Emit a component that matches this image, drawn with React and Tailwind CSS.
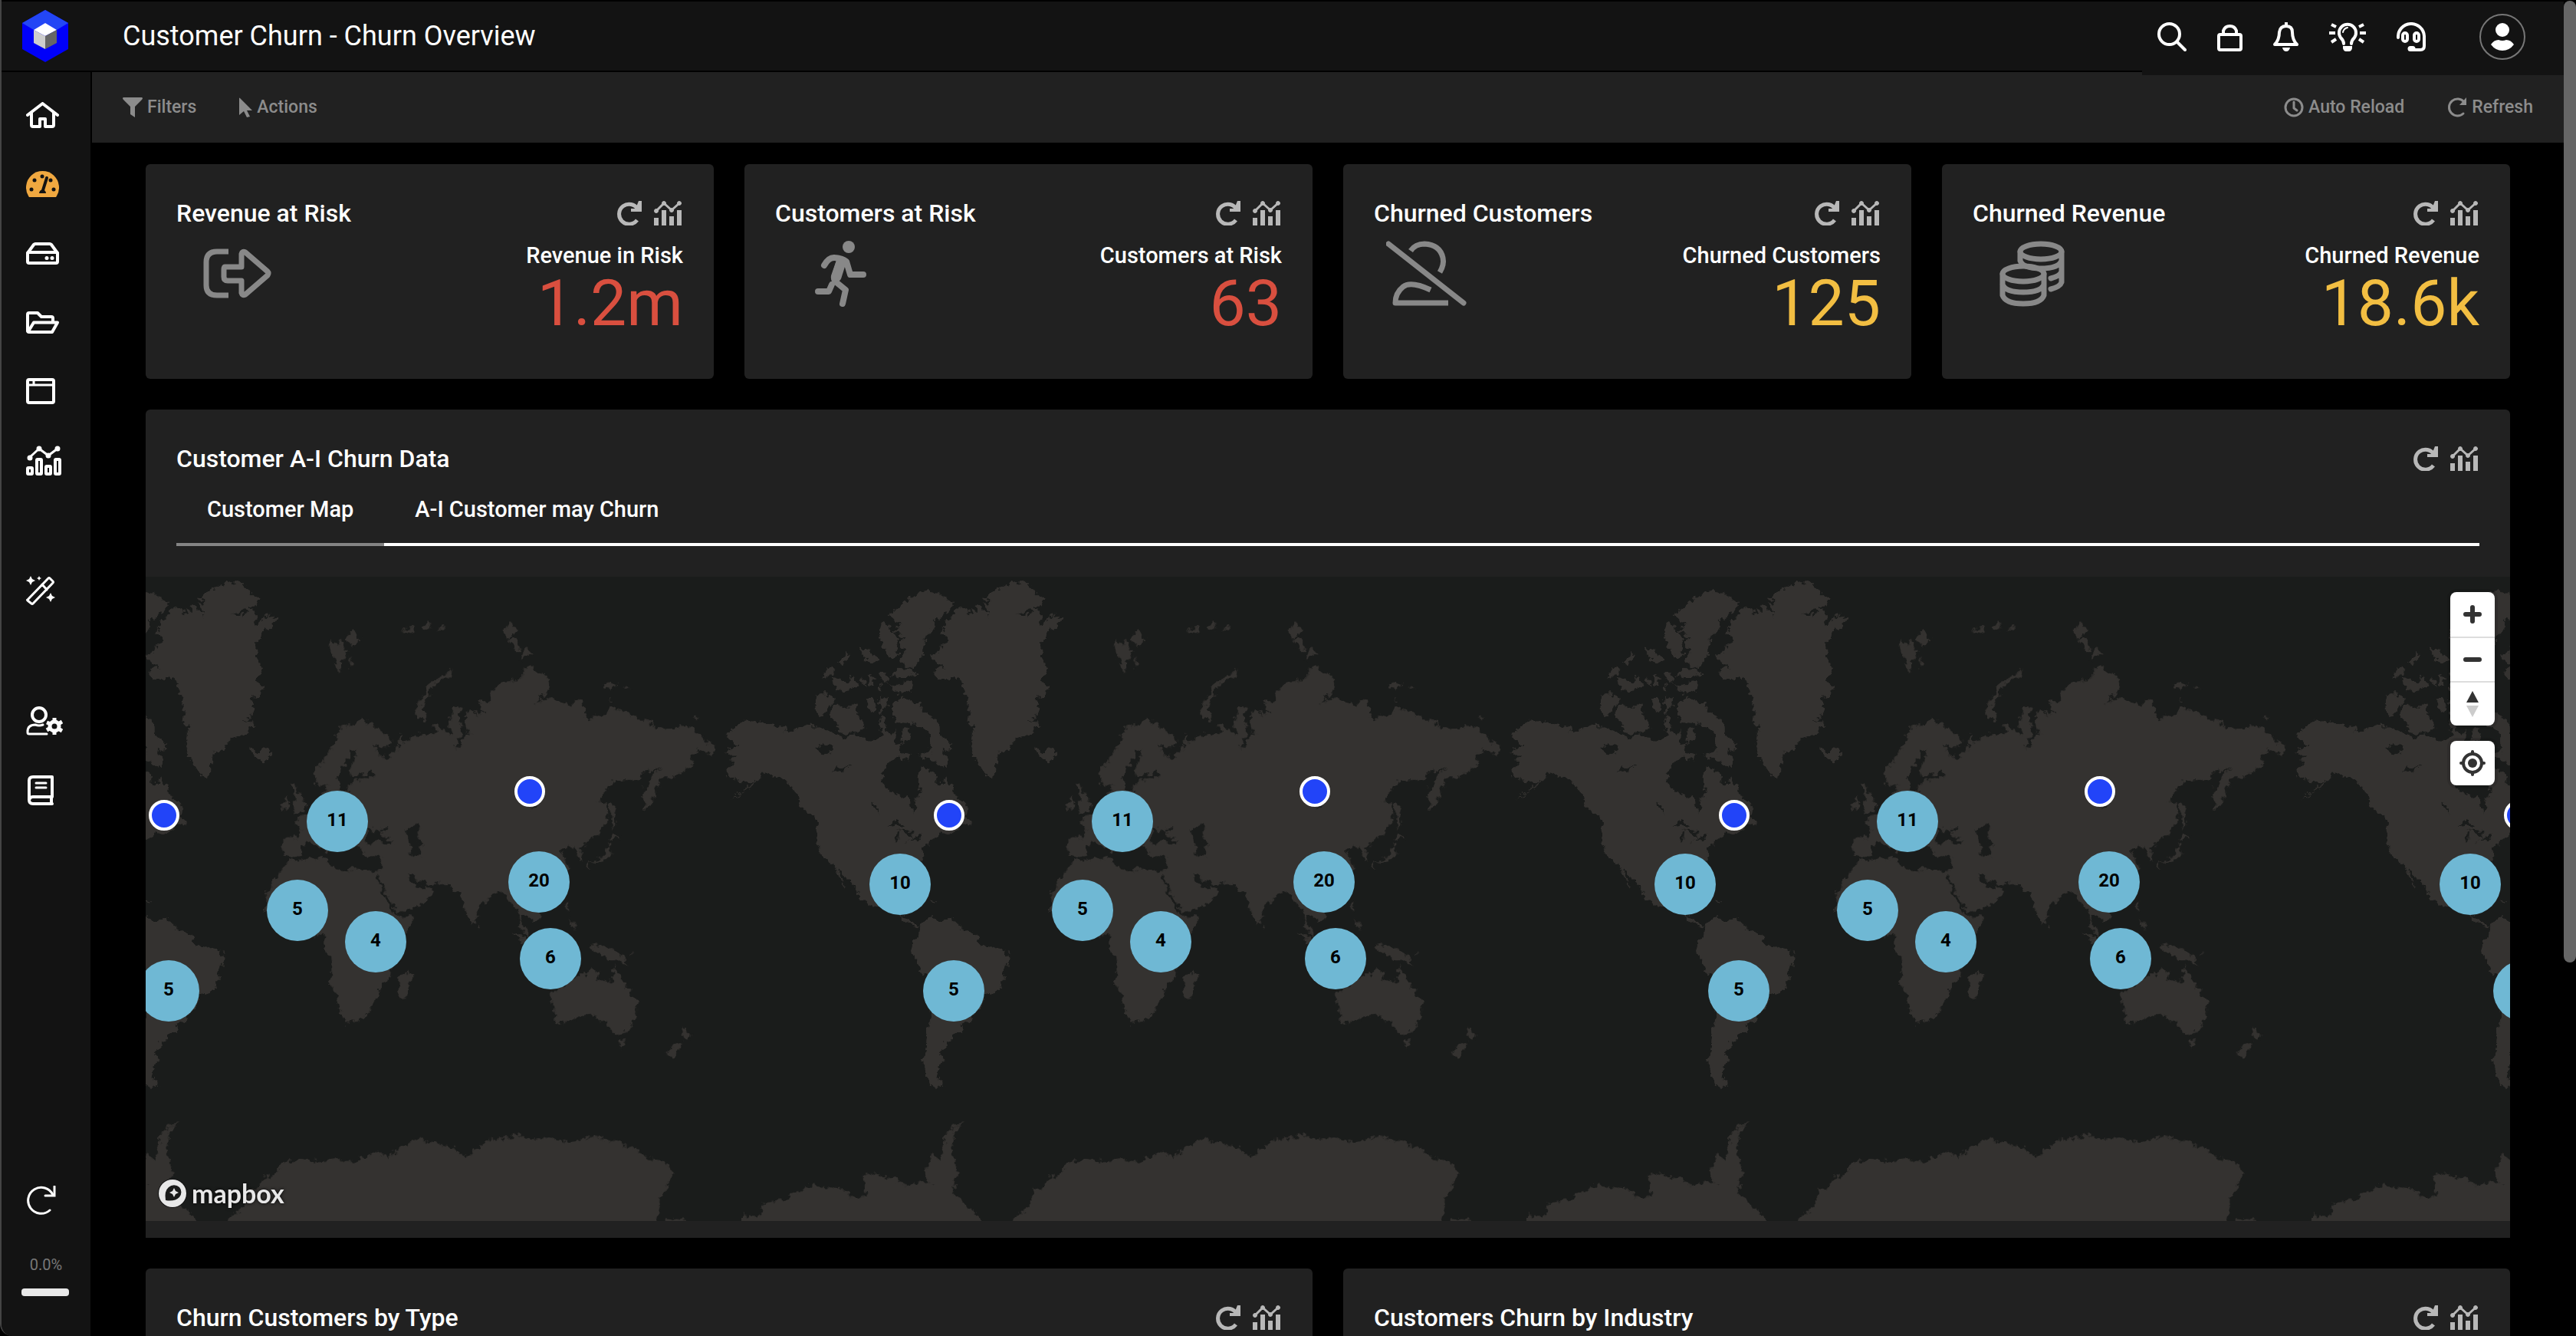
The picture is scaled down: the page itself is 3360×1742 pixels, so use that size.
import { useState } from "react";

/* ---------- Icons ---------- */

const Icon = ({ w, h, sw = 4, className = "", children }) => (
  <svg
    width={w}
    height={h}
    viewBox={`0 0 ${w} ${h}`}
    fill="none"
    stroke="currentColor"
    strokeWidth={sw}
    strokeLinecap="round"
    strokeLinejoin="round"
    className={`shrink-0 ${className}`}
    aria-hidden="true"
  >
    {children}
  </svg>
);

const LogoIcon = () => (
  <svg width="60" height="68" viewBox="0 0 60 68" aria-hidden="true">
    <path d="M30 0 60 17v34L30 68 0 51V17z" fill="#0000fa" />
    <path d="M30 0 60 17 45 26 30 17 15 26 0 17z" fill="#2346f5" />
    <path d="M30 17 45 26 30 34 15 26z" fill="#fff" />
    <path d="M15 26 30 34v17l-15-8z" fill="#cdcdcd" />
    <path d="M45 26 30 34v17l15-8z" fill="#666" />
  </svg>
);

const HomeIcon = () => (
  <Icon w={43} h={34}>
    <path d="M2 17 21.500 2 41 17" />
    <path d="M7 14v16q0 2 2 2h9V22h7v10h9q2 0 2-2V14" />
  </Icon>
);

const GaugeIcon = () => (
  <Icon w={43} h={34} className="text-[#f0a840]">
    <path
      d="M4 34A21.500 21.500 0 1 1 39 34z"
      fill="currentColor"
      stroke="none"
    />
    <path d="M27 9 22 25" stroke="#131313" />
    <path d="M17 29a4.500 4.500 0 1 1 9 0z" fill="#131313" stroke="none" />
    <g fill="#131313" stroke="none">
      <circle cx="7" cy="24" r="2.500" />
      <circle cx="11" cy="12" r="2.500" />
      <circle cx="21" cy="7" r="2.500" />
      <circle cx="32" cy="12" r="2.500" />
      <circle cx="36" cy="24" r="2.500" />
    </g>
  </Icon>
);

const DriveIcon = () => (
  <Icon w={43} h={29}>
    <path d="M2 14 10 3q1-1 2-1h19q1 0 2 1l8 11" />
    <rect x="2" y="13" width="39" height="14" rx="2" />
    <circle cx="27" cy="20.500" r="2.500" fill="currentColor" stroke="none" />
    <circle cx="34" cy="20.500" r="2.500" fill="currentColor" stroke="none" />
  </Icon>
);

const FolderIcon = () => (
  <Icon w={43} h={29}>
    <path d="M2 25V4q0-2 2-2h11l5 5h13q2 0 2 2v5" />
    <path d="M3 26 10 14.500h31L34 27H4q-2 0-2-2" />
  </Icon>
);

const WindowIcon = () => (
  <Icon w={38} h={34}>
    <rect x="2" y="2" width="34" height="30" rx="2" />
    <path d="M2 9h34M10 3v5" strokeWidth="3" />
  </Icon>
);

const AnalyticsIcon = () => (
  <Icon w={46} h={39}>
    <path d="M5 15 17 4l12 9L41 4" strokeWidth="3" />
    <g fill="currentColor" strokeWidth="3">
      <circle cx="5" cy="16" r="2" />
      <circle cx="17" cy="4" r="2" />
      <circle cx="29" cy="13" r="2" />
      <circle cx="41" cy="4" r="2" />
    </g>
    <rect x="2" y="29" width="6" height="8" rx="1" />
    <rect x="14" y="18" width="6" height="19" rx="1" />
    <rect x="26" y="27" width="6" height="10" rx="1" />
    <rect x="38" y="18" width="6" height="19" rx="1" />
  </Icon>
);

const WandIcon = () => (
  <Icon w={38} h={38}>
    <path
      d="M2 31 29 3q1-1 2 0l4 4q1 1 0 2L9 36q-1 1-2 0l-5-4q-1-1 0-1zM21 11l6 7"
      strokeWidth="3"
    />
    <g fill="currentColor" stroke="none">
      <path d="M6 0 8 4l4 2-4 2-2 4-2-4-4-2 4-2zM17 0l1 2 2 1-2 1-1 2-1-2-2-1 2-1zM32 22l2 4 4 2-4 2-2 4-2-4-4-2 4-2z" />
    </g>
  </Icon>
);

const UserGearIcon = () => (
  <Icon w={48} h={38}>
    <circle cx="17" cy="11" r="9" />
    <path d="M22 24q-5 2-10 0Q2 24 2 33v1q0 2 2 2h23" strokeWidth="3" />
    <circle cx="37" cy="26" r="6" strokeWidth="5" />
    <path
      d="M37 15v5M37 32v5M27 21l5 2M42 29l5 3M27 31l5-3M42 23l5-3"
      strokeWidth="5"
      strokeLinecap="butt"
    />
  </Icon>
);

const BookIcon = () => (
  <Icon w={34} h={39} className="ml-[2px]">
    <path d="M32 28V2H7Q2 2 2 7v25q0 5 5 5h25M31 28v9M3 30q1-2 4-2h25" />
    <path d="M11 10h13M11 16h13" strokeWidth="3" />
  </Icon>
);

const SyncIcon = () => (
  <Icon w={38} h={38} sw={3}>
    <path d="M34 12A17 17 0 1 0 30 32" />
    <path d="M36 1v12H24" strokeLinejoin="miter" />
  </Icon>
);

const SearchIcon = () => (
  <Icon w={38} h={38}>
    <circle cx="15.500" cy="15.500" r="13.500" />
    <path d="m26 26 10 10" />
  </Icon>
);

const LockIcon = () => (
  <Icon w={33} h={38}>
    <rect x="2" y="16" width="29" height="20" rx="2" />
    <path d="M8 15v-4a9 9 0 0 1 17 0v4" />
  </Icon>
);

const BellIcon = () => (
  <Icon w={33} h={38}>
    <path d="M17 1v4M2 29q6-6 6-16Q9 5 17 5t8 8q0 10 6 16z" />
    <path d="M12 33h10q-1 5-5 5t-5-5z" fill="currentColor" stroke="none" />
  </Icon>
);

const BulbIcon = () => (
  <Icon w={48} h={38}>
    <path d="M19 28q0-4-4-8A11 11 0 1 1 33 20q-4 4-4 8" />
    <path d="M18 13q1-5 6-6" strokeWidth="2" />
    <path d="M18 31h12v3q-1 4-4 4h-4q-3 0-4-4z" fill="currentColor" stroke="none" />
    <path
      d="M0 14h8M40 14h8M3 3l6 3M45 3l-6 3M3 26l6-4M45 26l-6-4"
      strokeLinecap="butt"
    />
  </Icon>
);

const HeadsetIcon = () => (
  <Icon w={38} h={38} sw={4}>
    <path d="M2 20A17 17 0 0 1 36 18v13q0 5-5 5H20" />
    <rect x="8" y="14" width="6" height="11" rx="3" />
    <rect x="23" y="14" width="6" height="11" rx="3" />
    <path d="M18 34.500h3" strokeWidth="7" />
  </Icon>
);

const RefreshIcon = () => (
  <Icon w={32} h={32} sw={5}>
    <path d="M27 11A13 13 0 1 0 26 25" strokeLinecap="butt" />
    <path d="M32 0v14H18V10h6l4-10z" fill="currentColor" stroke="none" />
  </Icon>
);

const BarsIcon = () => (
  <Icon w={36} h={32} sw={3}>
    <path d="M3 13 13 3l10 9L33 3" />
    <g fill="currentColor" strokeWidth="1">
      <circle cx="3" cy="13" r="2.500" />
      <circle cx="13" cy="3" r="2.500" />
      <circle cx="23" cy="12" r="2.500" />
      <circle cx="33" cy="3" r="2.500" />
    </g>
    <path
      d="M0 22h6v10H0zM10 12h6v20h-6zM20 20h6v12h-6zM30 12h6v20h-6z"
      fill="currentColor"
      stroke="none"
    />
  </Icon>
);

const FunnelIcon = () => (
  <Icon w={26} h={26}>
    <path
      d="M1 0h24q2 1 0 3l-9 9v14l-6-4V12L1 3q-2-2 0-3z"
      fill="currentColor"
      stroke="none"
    />
  </Icon>
);

const PointerIcon = () => (
  <Icon w={17} h={26}>
    <path
      d="M0 1q0-1 1 0l16 16h-7l4 8-4 1-4-8-6 5z"
      fill="currentColor"
      stroke="none"
    />
  </Icon>
);

const ClockIcon = () => (
  <Icon w={26} h={26} sw={3}>
    <circle cx="13" cy="13" r="11" />
    <path d="M13 6v8l4 3" />
  </Icon>
);

const SmallRefreshIcon = () => (
  <Icon w={26} h={26} sw={3}>
    <path d="M22 6A11 11 0 1 0 21 21" />
    <path d="M25 0v10H16z" fill="currentColor" stroke="none" />
  </Icon>
);

const ExitIcon = () => (
  <Icon w={120} h={86} sw={7} className="text-[#888]">
    <path d="M48 14H33Q19 14 19 28v30q0 13 14 13h15" strokeLinecap="butt" />
    <path d="M43 34h22V17q1-4 5-2l29 25q2 2 0 5L70 70q-4 2-5-2V52H47q-5 0-5-5v-9q0-4 1-4z" />
  </Icon>
);

const RunnerIcon = () => (
  <Icon w={120} h={86} sw={8} className="text-[#888]">
    <circle cx="76" cy="8" r="8" fill="currentColor" stroke="none" />
    <path d="M44 32q6-11 14-10 10 1 15 5l5 17h17" />
    <path d="M64 26 57 46q-1 5 4 9l11 9-4 18" />
    <path d="M66 28 60 47" strokeWidth="13" />
    <path d="M54 57 50 66H36" />
  </Icon>
);

const UserSlashIcon = () => (
  <Icon w={120} h={86} sw={7} className="-ml-1 text-[#888]">
    <path d="M3 4 101 81" />
    <path d="M32 13Q38 4 50 4q20 1 24 18 2 9-4 19" strokeLinecap="butt" />
    <path d="M58 64Q32 52 22 60 12 68 12 81h69" strokeLinecap="butt" />
  </Icon>
);

const CoinsIcon = () => (
  <Icon w={120} h={86} sw={7} className="text-[#888]">
    <ellipse cx="69" cy="14" rx="27" ry="10" />
    <path d="M42 14v12q4 10 27 10t27-10V14M96 26v14q-2 6-14 9M96 40v14q-2 6-14 9" />
    <ellipse cx="46" cy="43" rx="27" ry="10" />
    <path d="M19 43v28q4 11 27 11t27-11V43M19 57q4 10 27 10t27-10" />
  </Icon>
);

/* ---------- Map ---------- */

const AMERICAS =
  "M130 489L150 482 160 465 185 455 207 438 225 447 260 452 300 460 340 468 365 482 400 466 437 456 450 470 485 468 510 478 540 485 560 497 600 488 640 500 690 503 705 490 690 460 700 430 712 440 708 470 725 480 740 488 752 475 752 510 770 520 775 470 800 470 800 500 775 515 765 530 775 540 800 545 808 562 780 560 760 548 740 560 710 590 697 605 700 625 715 650 745 655 775 668 798 675 800 700 815 713 828 705 825 680 842 660 835 640 833 610 830 595 850 585 885 590 898 605 900 625 918 635 935 612 955 640 960 660 990 680 1008 700 1005 725 1025 740 1027 753 1000 748 975 765 945 780 925 775 890 790 850 820 845 850 842 870 830 900 760 950 700 990 680 990 620 970 612 945 575 915 545 880 540 890 570 930 572 937 545 910 525 870 495 855 465 812 467 745 440 725 400 690 385 650 345 620 275 598 250 620 215 645 145 678 165 665 200 650 230 628 200 628 165 622 137 605 135 590 155 570 170 550 145 550 120 535 145 530 170 522 150 500Z" +
  "M765 1015L785 1018 800 1035 820 1035 838 1045 830 1052 815 1045 790 1040Z" +
  "M838 1048L860 1028 885 1020 905 1030 945 1028 970 1035 1000 1058 1035 1062 1055 1095 1100 1110 1140 1117 1172 1135 1170 1155 1145 1178 1140 1210 1125 1240 1078 1252 1050 1300 1020 1330 990 1328 1000 1348 990 1360 960 1365 950 1382 930 1385 935 1398 915 1420 928 1440 905 1470 900 1490 928 1513 905 1520 875 1508 860 1475 855 1440 865 1400 868 1350 885 1310 880 1250 865 1192 850 1188 835 1160 807 1125 815 1090 835 1075Z" +
  "M877 262L915 240 942 210 920 195 930 165 962 140 975 122 1015 113 1020 140 1030 120 1050 130 1045 105 1075 130 1092 140 1070 100 1100 105 1075 85 1110 70 1150 50 1190 40 1230 45 1250 60 1262 75 1290 95 1285 110 1255 115 1283 125 1275 170 1300 155 1325 135 1357 145 1350 165 1310 190 1285 220 1282 260 1305 300 1285 330 1305 350 1290 375 1255 385 1275 405 1270 430 1240 445 1278 460 1240 485 1190 500 1165 535 1128 540 1125 575 1110 595 1105 615 1075 600 1045 565 1027 520 1030 485 1045 460 1015 460 1018 430 1018 400 1005 360 980 325 905 325 890 300 925 292Z" +
  "M723 140L760 120 800 90 850 70 880 72 920 80 962 105 950 125 900 150 880 190 850 220 855 245 830 280 800 295 775 285 765 265 790 245 760 225 790 200 740 185 780 165 745 155Z" +
  "M690 200L700 160 712 155 735 185 765 205 750 230 765 255 740 265 710 245Z" +
  "M735 315L760 295 830 300 825 315 770 322ZM720 330L735 345 815 335 812 360 745 365ZM655 315L675 320 670 350 655 345ZM685 305L720 310 735 330 715 335 690 320ZM690 340L705 345 700 362 690 355ZM615 230L660 250 690 270 665 280 635 260ZM540 275L575 250 580 265 560 285ZM478 325L510 292 525 295 515 315ZM520 320L545 325 575 340 590 312 612 345 575 360 540 360 525 340ZM620 320L645 330 640 345Z" +
  "M465 368L495 368 530 385 505 405 495 430 475 435 455 415ZM510 405L540 400 570 410 605 395 615 430 640 465 610 480 570 485 530 470 550 455 520 440ZM650 385L680 385 680 420 665 430 650 410ZM695 380L728 383 710 415 695 430Z" +
  "M740 395L770 383 840 395 850 425 895 440 915 465 915 490 960 520 945 540 920 525 935 560 935 585 900 570 835 550 850 540 885 545 870 500 880 490 850 465 800 455 750 450 738 425Z" +
  "M1263 528L1285 540 1325 523 1343 542 1315 563 1290 565 1268 545ZM870 968L905 973 885 977Z";

const AMERICAS_WATER =
  "M455 525L490 515 517 520 505 540 485 545ZM522 600L530 585 555 588 588 575 560 595ZM662 688L675 685 687 720 678 715ZM718 757L755 737 782 755 755 755ZM752 800L755 770 765 768 762 800ZM765 765L810 768 820 790 800 785ZM790 803L847 780 845 788 815 800ZM1192 140L1215 125 1255 125 1240 148 1235 133Z";

const EURASIA =
  "M210 605L212 585 240 565 258 530 275 495 290 465 325 455 350 443 375 455 410 480 437 500 435 520 410 525 385 515 400 540 415 560 445 535 460 520 462 490 470 490 468 510 485 505 500 492 555 487 570 485 555 460 590 475 613 490 605 450 620 405 638 408 635 450 643 480 625 525 635 520 655 485 672 485 655 475 648 450 655 430 665 410 690 440 675 415 705 428 693 390 725 390 725 360 760 335 815 325 830 290 845 285 850 300 880 310 900 330 895 355 855 398 880 380 920 385 965 405 965 388 990 390 1000 410 1000 430 1012 445 1030 432 1065 430 1075 410 1130 425 1155 445 1190 445 1195 467 1245 468 1300 463 1330 480 1350 500 1385 527 1370 550 1330 530 1310 550 1318 578 1290 595 1262 610 1230 610 1210 640 1213 655 1195 680 1178 710 1170 675 1172 650 1190 620 1225 580 1195 600 1180 590 1155 620 1085 622 1040 675 1065 690 1070 725 1050 770 1000 810 985 820 997 840 995 855 983 853 975 820 955 810 928 825 935 840 945 850 950 890 900 960 870 1000 870 1025 850 1035 815 1010 812 1035 835 1060 832 1080 808 1050 805 1000 790 990 770 950 735 952 690 1000 683 1030 670 1042 645 985 640 955 620 950 605 925 540 925 515 915 500 900 485 893 490 915 515 935 535 930 555 945 540 970 505 990 455 1012 425 960 400 905 390 888 403 885 408 845 385 843 350 835 345 810 300 815 250 830 195 800 175 815 170 840 140 845 120 835 120 788 165 788 170 765 150 742 175 728 190 725 240 690 232 650 250 640 220 635Z" +
  "M140 850L160 857 240 842 245 865 305 892 320 878 400 887 390 905 430 990 455 1020 502 1020 490 1050 440 1110 435 1195 402 1220 400 1255 385 1262 378 1290 350 1322 300 1330 290 1300 270 1240 253 1210 265 1165 260 1140 235 1100 240 1070 180 1080 90 1040 70 1000 72 950 95 905 120 880Z" +
  "M490 1175L497 1195 480 1250 465 1262 455 1245 460 1200ZM685 1040L697 1050 690 1055ZM145 635L158 632 165 655 185 690 183 710 150 722 160 705 145 690 155 680ZM115 690L130 672 138 685 135 705 115 708Z" +
  "M505 425L525 380 540 345 575 320 610 303 615 312 570 335 545 365 528 405 540 445 520 440ZM247 215L260 212 275 230 285 208 300 235 308 245 290 280 283 310 270 280 262 255ZM300 200L325 190 348 210 325 230 305 215ZM312 262L328 285 318 290Z" +
  "M468 183L500 172 498 190ZM525 178L545 155 552 175 535 185ZM560 185L590 165 588 178ZM765 180L785 158 800 180 790 200 768 208ZM775 210L805 208 812 240 800 245ZM813 270L828 230 847 250ZM1052 340L1065 328 1098 342 1080 358 1060 355ZM1112 348L1135 352 1125 360ZM1316 438L1335 433 1330 444ZM1075 385L1088 390 1080 394Z" +
  "M1072 690L1085 688 1090 730 1088 768 1080 740ZM1075 780L1085 780 1102 788 1085 798 1072 795ZM1070 808L1080 820 1070 850 1040 858 1010 865 1050 845ZM1005 865L1015 862 1012 882ZM945 975L955 980 953 1005 945 1000ZM960 1020L978 1050 968 1055Z" +
  "M787 1060L815 1075 840 1100 850 1125 825 1100ZM1015 1100L1060 1108 1095 1118 1115 1140 1133 1160 1100 1148 1075 1150 1055 1130 1030 1120ZM1130 1130L1147 1125 1135 1135Z" +
  "M900 1245L930 1225 985 1187 1005 1190 1015 1172 1045 1178 1040 1205 1070 1210 1082 1205 1085 1165 1105 1200 1130 1235 1153 1270 1153 1300 1130 1352 1100 1362 1070 1350 1062 1320 1045 1330 1025 1308 985 1310 960 1325 915 1332 913 1300ZM1100 1382L1120 1382 1112 1402 1103 1398ZM1282 1335L1297 1355 1312 1358 1300 1382 1290 1372ZM1240 1420L1275 1382 1285 1388 1260 1430 1245 1428Z";

const EURASIA_WATER =
  "M285 600L290 580 315 555 315 535 335 533 335 550 315 575 317 610 355 605 385 605 380 615 335 620 310 640 315 650 285 655ZM365 595L375 590 387 605 375 615ZM365 800L365 765 400 770 420 790 443 795 440 808 400 800 365 812ZM395 765L425 755 415 770ZM476 770L505 752 517 760 505 775 525 805 520 843 490 838 492 805ZM838 710L868 690 858 703Z";

const ANTARCTICA =
  "M98 700L98 612 125 620 140 565 170 552 210 515 228 488 240 498 290 512 298 545 328 542 322 455 350 445 355 462 385 470 405 500 430 485 447 485 435 440 445 400 452 368 462 395 468 370 472 310 485 270 510 250 490 285 495 310 488 350 496 450 490 530 515 575 542 636 560 700Z" +
  "M570 700L600 636 632 570 640 505 650 515 665 470 690 450 700 410 735 395 775 400 800 390 840 402 875 365 898 390 915 355 945 330 955 302 975 332 1020 345 1040 390 1060 360 1085 315 1130 315 1130 285 1140 300 1180 320 1198 303 1218 325 1250 320 1285 307 1330 330 1360 358 1390 400 1415 410 1430 440 1420 490 1405 550 1400 630 1403 700ZM1415 700V622L1455 630V700Z";

// one world is 1024px wide at this zoom level
const WORLD_OFFSETS = [-1024, 0, 1024, 2048];
const MAP_EXTENT = 3124;

const CLUSTERS = [
  { x: 984, y: 401, count: 10 },
  { x: 1054, y: 540, count: 5 },
  { x: 1274, y: 319, count: 11 },
  { x: 1222, y: 435, count: 5 },
  { x: 1324, y: 476, count: 4 },
  { x: 1537, y: 398, count: 20 },
  { x: 1552, y: 498, count: 6 },
];

const POINTS = [
  { x: 1048, y: 311 },
  { x: 1525, y: 280 },
];

// repeat the markers on every world copy, skipping the ones off the map
const repeatMarkers = (markers) =>
  WORLD_OFFSETS.flatMap((dx) =>
    markers.map((m) => ({ ...m, x: m.x + dx }))
  ).filter((m) => m.x > -20 && m.x < MAP_EXTENT);

const WorldMap = () => (
  <svg className="block h-full w-full" aria-hidden="true">
    <defs>
      <filter
        id="coast"
        x="0"
        y="0"
        width="100%"
        height="100%"
        colorInterpolationFilters="sRGB"
      >
        <feTurbulence type="fractalNoise" baseFrequency="0.12" numOctaves="3" seed="4" />
        <feDisplacementMap in="SourceGraphic" scale="13" xChannelSelector="R" yChannelSelector="G" />
      </filter>
      <g id="world" filter="url(#coast)" fill="#343230">
        <g transform="translate(710 -12) scale(.35714 .44643)">
          <path d={AMERICAS} />
          <path d={AMERICAS_WATER} fill="#1a1c1b" />
        </g>
        <g transform="translate(1150 -12) scale(.44643)">
          <path d={EURASIA} />
          <path d={EURASIA_WATER} fill="#1a1c1b" />
        </g>
        <path d={ANTARCTICA} transform="translate(710 628) scale(.70153 .33333)" />
      </g>
    </defs>
    {WORLD_OFFSETS.map((dx) => (
      <use key={dx} href="#world" x={dx} />
    ))}
  </svg>
);

const MapControls = () => (
  <div className="absolute top-5 right-5 flex flex-col gap-5 text-[#333]">
    <div className="flex w-[58px] flex-col overflow-hidden rounded-lg bg-white ring-4 ring-black/10">
      <button aria-label="Zoom in" className="flex h-[58px] items-center justify-center">
        <Icon w={24} h={24} sw={6}>
          <path d="M3 12h18M12 3v18" />
        </Icon>
      </button>
      <button
        aria-label="Zoom out"
        className="flex h-[58px] items-center justify-center border-t-2 border-[#ddd]"
      >
        <Icon w={24} h={24} sw={6}>
          <path d="M3 12h18" />
        </Icon>
      </button>
      <button
        aria-label="Reset bearing"
        className="flex h-[58px] items-center justify-center border-t-2 border-[#ddd]"
      >
        <svg width="16" height="34" viewBox="0 0 16 34" aria-hidden="true">
          <path d="M8 0 16 15H0z" fill="#333" />
          <path d="M8 34 16 19H0z" fill="#ccc" />
        </svg>
      </button>
    </div>
    <button
      aria-label="Find my location"
      className="flex h-[58px] w-[58px] items-center justify-center rounded-lg bg-white ring-4 ring-black/10"
    >
      <Icon w={34} h={34} sw={4}>
        <circle cx="17" cy="17" r="12" />
        <circle cx="17" cy="17" r="6" fill="currentColor" stroke="none" />
        <path d="M17 2v3M17 29v3M2 17h3M29 17h3" />
      </Icon>
    </button>
  </div>
);

const CustomerMap = () => (
  <div className="relative h-[840px] overflow-hidden bg-[#1a1c1b]">
    <WorldMap />
    {repeatMarkers(CLUSTERS).map((c) => (
      <div
        key={`${c.x}-${c.y}`}
        className="absolute flex h-20 w-20 -translate-x-1/2 -translate-y-1/2 items-center justify-center rounded-full bg-[#6fb8d4] pb-1 font-[Roboto,sans-serif] text-2xl font-bold text-black"
        style={{ left: c.x, top: c.y }}
      >
        {c.count}
      </div>
    ))}
    {repeatMarkers(POINTS).map((p) => (
      <div
        key={p.x}
        className="absolute h-10 w-10 -translate-x-1/2 -translate-y-1/2 rounded-full border-4 border-white bg-[#2244f8]"
        style={{ left: p.x, top: p.y }}
      />
    ))}
    <MapControls />
    <a
      href="#mapbox"
      className="absolute bottom-4 left-4 flex items-center gap-[6px] font-[Lato,sans-serif] text-[34px] leading-10 font-bold text-[#e8e8e8] [text-shadow:0_0_4px_#000]"
    >
      <svg width="38" height="38" viewBox="0 0 38 38" aria-hidden="true">
        <circle cx="19" cy="19" r="19" fill="#111" />
        <circle cx="19" cy="19" r="18" fill="#e8e8e8" />
        <path d="M10 28Q8 16 14 11a10 10 0 0 1 14 0 10 10 0 0 1 0 13Q22 30 10 28z" fill="#1a1b1a" />
        <path d="m21 12 2 4 4 2-4 2-2 4-2-4-4-2 4-2z" fill="#e8e8e8" />
      </svg>
      mapbox
    </a>
  </div>
);

/* ---------- Cards ---------- */

const CardHeader = ({ title }) => (
  <div className="flex h-12 items-center justify-between pr-[42px] pl-10">
    <h2 className="text-[32px] font-medium">{title}</h2>
    <div className="flex gap-4 text-[#b8b8b8]">
      <button aria-label={`Reload ${title}`}>
        <RefreshIcon />
      </button>
      <button aria-label={`Analyse ${title}`}>
        <BarsIcon />
      </button>
    </div>
  </div>
);

const KpiCard = ({ title, label, value, color, icon: CardIcon }) => (
  <section className="h-[280px] rounded-md bg-[#212121] pt-10">
    <CardHeader title={title} />
    <div className="mt-3 flex justify-between pr-10 pl-[60px]">
      <CardIcon />
      <div className="text-right">
        <p className="text-[29px] leading-[38px] font-medium">{label}</p>
        <p className={`mt-2 text-[84px] leading-[72px] ${color}`}>{value}</p>
      </div>
    </div>
  </section>
);

const KPIS = [
  {
    title: "Revenue at Risk",
    label: "Revenue in Risk",
    value: "1.2m",
    color: "text-[#d94f3f]",
    icon: ExitIcon,
  },
  {
    title: "Customers at Risk",
    label: "Customers at Risk",
    value: "63",
    color: "text-[#d94f3f]",
    icon: RunnerIcon,
  },
  {
    title: "Churned Customers",
    label: "Churned Customers",
    value: "125",
    color: "text-[#f2be42]",
    icon: UserSlashIcon,
  },
  {
    title: "Churned Revenue",
    label: "Churned Revenue",
    value: "18.6k",
    color: "text-[#f2be42]",
    icon: CoinsIcon,
  },
];

const SIDEBAR = [
  { name: "Home", icon: HomeIcon },
  { name: "Dashboards", icon: GaugeIcon },
  { name: "Data", icon: DriveIcon },
  { name: "Files", icon: FolderIcon },
  { name: "Apps", icon: WindowIcon },
  { name: "Analytics", icon: AnalyticsIcon },
  { name: "Wizard", icon: WandIcon, spaced: true },
  { name: "Users", icon: UserGearIcon, spaced: true },
  { name: "Docs", icon: BookIcon },
];

const TOP_ACTIONS = [
  { name: "Search", icon: SearchIcon },
  { name: "Lock", icon: LockIcon },
  { name: "Notifications", icon: BellIcon },
  { name: "Ideas", icon: BulbIcon },
  { name: "Support", icon: HeadsetIcon },
];

const TABS = ["Customer Map", "A-I Customer may Churn"];

const Header = () => (
  <header className="mt-[2px] mb-[2px] flex h-[90px] items-start justify-between bg-[#131313]">
    <div className="flex h-[90px] items-center pl-[27px]">
      <LogoIcon />
      <h1 className="pl-[71px] text-[36px]">Customer Churn - Churn Overview</h1>
    </div>
    <nav className="relative z-10 flex h-24 items-center gap-10 bg-[#131313] pr-[50px] pb-1 pl-5">
      {TOP_ACTIONS.map((item) => (
        <button key={item.name} aria-label={item.name}>
          <item.icon />
        </button>
      ))}
      <button
        aria-label="Account"
        className="ml-[30px] flex h-[60px] w-[60px] items-center justify-center rounded-full border-2 border-[#777]"
      >
        <svg width="30" height="36" viewBox="0 0 30 36" fill="currentColor" aria-hidden="true">
          <circle cx="15" cy="9" r="9" />
          <path d="M0 28q4-6 10-6 5 2 10 0 6 0 10 6-6 8-15 8T0 28z" />
        </svg>
      </button>
    </nav>
  </header>
);

const Sidebar = () => (
  <aside className="flex w-[118px] shrink-0 flex-col border-r-2 border-black bg-[#131313]">
    <nav className="flex flex-col pt-[11px]">
      {SIDEBAR.map((item) => (
        <button
          key={item.name}
          aria-label={item.name}
          className={`flex h-[90px] items-center pl-8 ${item.spaced ? "mt-20" : ""}`}
        >
          <item.icon />
        </button>
      ))}
    </nav>
    <div className="mt-auto pb-[52px]">
      <button aria-label="Sync" className="block pl-[33px]">
        <SyncIcon />
      </button>
      <p className="mt-[51px] text-center text-[20px] leading-7 text-[#777]">0.0%</p>
      <div className="mt-[17px] ml-[26px] h-[10px] w-[62px] rounded-sm bg-[#e8e8e8]" />
    </div>
  </aside>
);

const Toolbar = () => (
  <div className="flex h-[92px] shrink-0 items-center justify-between bg-[#212121] px-10 text-[23px] font-medium text-[#8c8c8c]">
    <div className="flex gap-14">
      <button className="flex items-center gap-[6px]">
        <FunnelIcon />
        Filters
      </button>
      <button className="flex items-center gap-[6px]">
        <PointerIcon />
        Actions
      </button>
    </div>
    <div className="flex gap-14">
      <button className="flex items-center gap-[6px]">
        <ClockIcon />
        Auto Reload
      </button>
      <button className="flex items-center gap-[6px]">
        <SmallRefreshIcon />
        Refresh
      </button>
    </div>
  </div>
);

const App = () => {
  const [activeTab, setActiveTab] = useState(TABS[0]);

  return (
    <div className="flex h-screen overflow-hidden bg-black font-[Roboto,sans-serif] text-white">
      <div className="flex min-w-0 flex-1 flex-col overflow-hidden rounded-bl-2xl border-l-2 border-[#444]">
        <Header />
        <div className="flex min-h-0 flex-1">
          <Sidebar />

          {/* Main Content */}
          <div className="flex min-w-0 flex-1 flex-col">
            <Toolbar />
            <main className="flex min-h-0 flex-1 flex-col gap-10 overflow-hidden px-[70px] pt-7">
              <div className="grid shrink-0 grid-cols-4 gap-10">
                {KPIS.map((kpi) => (
                  <KpiCard key={kpi.title} {...kpi} />
                ))}
              </div>

              {/* Churn map */}
              <section className="shrink-0 rounded-t-md bg-[#212121] pt-10 pb-[22px]">
                <CardHeader title="Customer A-I Churn Data" />
                <div
                  role="tablist"
                  className="mx-10 mb-10 flex text-[29px] font-medium"
                >
                  {TABS.map((tab) => (
                    <button
                      key={tab}
                      role="tab"
                      aria-selected={activeTab === tab}
                      onClick={() => setActiveTab(tab)}
                      className={`h-[90px] border-b-4 px-10 ${
                        activeTab === tab ? "border-[#848484]" : "border-white"
                      }`}
                    >
                      {tab}
                    </button>
                  ))}
                  <div className="flex-1 border-b-4 border-white" />
                </div>
                <CustomerMap />
              </section>

              <div className="grid shrink-0 grid-cols-2 gap-10">
                <section className="h-[600px] rounded-md bg-[#212121] pt-10">
                  <CardHeader title="Churn Customers by Type" />
                </section>
                <section className="h-[600px] rounded-md bg-[#212121] pt-10">
                  <CardHeader title="Customers Churn by Industry" />
                </section>
              </div>
            </main>
          </div>
        </div>
      </div>

      {/* Scrollbar */}
      <div className="w-4 shrink-0 pt-[1px]">
        <div className="h-[72%] w-4 rounded-lg bg-[#666]" />
      </div>
    </div>
  );
};

export default App;
